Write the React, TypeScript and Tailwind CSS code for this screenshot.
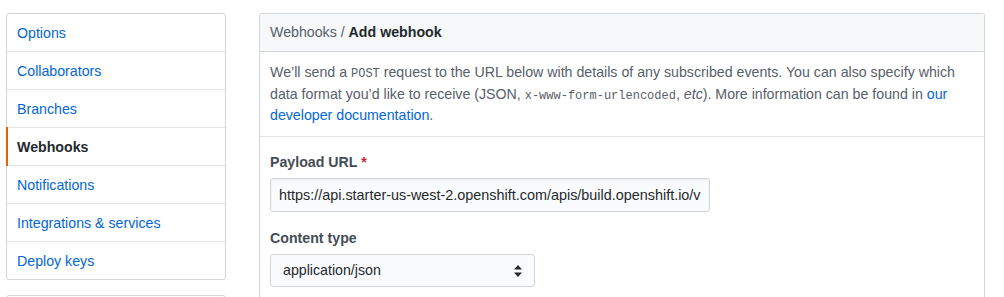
import React from "react";

const menuItems = [
  { name: "Options" },
  { name: "Collaborators" },
  { name: "Branches" },
  { name: "Webhooks", selected: true },
  { name: "Notifications" },
  { name: "Integrations & services" },
  { name: "Deploy keys" },
];

function SelectArrows() {
  return (
    <svg width="8" height="12" viewBox="0 0 8 12" className="absolute right-[12px] top-[10px]">
      <path d="M4 0 L8 4.5 H0 Z" fill="#24292e" />
      <path d="M4 12 L8 7.5 H0 Z" fill="#24292e" />
    </svg>
  );
}

const mono = { fontFamily: '"Liberation Mono", monospace' };

export default function App() {
  return (
    <div
      className="flex items-start bg-white pl-[6px] pt-[13px] text-[14.2px] leading-[21px] text-[#24292e]"
      style={{ fontFamily: '"Liberation Sans", Arial, sans-serif' }}
    >
      {/* sidebar */}
      <div className="w-[220px] shrink-0">
        <nav className="rounded-[3px] border border-[#d1d5da]">
          {menuItems.map((item, i) => (
            <div
              key={item.name}
              className={`relative px-[10px] pt-[9px] pb-[7px] ${
                i < menuItems.length - 1 ? "border-b border-[#e1e4e8]" : ""
              } ${item.selected ? "font-bold text-[#24292e]" : "text-[#0366d6]"}`}
            >
              {item.selected && (
                <span className="absolute -left-px -top-px bottom-[-1px] w-[2px] bg-[#e36209]" />
              )}
              {item.name}
            </div>
          ))}
        </nav>
        <div className="mt-[15px] h-[40px] rounded-[3px] border border-[#d1d5da]" />
      </div>

      {/* main panel */}
      <div className="ml-[33px] w-[726px] shrink-0 rounded-t-[3px] border border-b-0 border-[#d1d5da]">
        <div className="border-b border-[#d1d5da] bg-[#f6f8fa] px-[10px] py-[8px] text-[#586069]">
          Webhooks / <strong className="text-[#24292e]">Add webhook</strong>
        </div>

        <p className="border-b border-[#e1e4e8] px-[10px] pt-[10px] pb-[9px] leading-[21.5px] text-[#586069]">
          We’ll send a{" "}
          <code className="text-[12px] leading-[0]" style={mono}>
            POST
          </code>{" "}
          request to the URL below with details of any subscribed events. You can also specify which
          data format you’d like to receive (JSON,{" "}
          <code className="text-[12px] leading-[0]" style={mono}>
            x-www-form-urlencoded
          </code>
          , <em>etc</em>). More information can be found in{" "}
          <a className="text-[#0366d6]">our developer documentation</a>.
        </p>

        <div className="px-[10px] pt-[15px] pb-[20px]">
          <label className="block font-bold text-[#444d56]">
            Payload URL <span className="text-[#cb2431]">*</span>
          </label>
          <input
            readOnly
            value="https://api.starter-us-west-2.openshift.com/apis/build.openshift.io/v1/namespaces/demo/buildconfigs/app/webhooks/secret/github"
            className="mt-[5px] block h-[34px] w-[440px] rounded-[3px] border border-[#d1d5da] bg-[#fafbfc] px-[8px] text-[14.4px] text-[#24292e] shadow-[inset_0_1px_2px_rgba(27,31,35,0.075)] outline-none"
            style={{ fontFamily: '"Liberation Sans", Arial, sans-serif' }}
          />

          <label className="mt-[16px] block font-bold text-[#444d56]">Content type</label>
          <div className="relative mt-[5px] h-[33px] w-[265px] rounded-[3px] border border-[#d1d5da] bg-[#fafbfc] pl-[12px] leading-[31px] text-[#24292e]">
            application/json
            <SelectArrows />
          </div>
        </div>
      </div>
    </div>
  );
}
